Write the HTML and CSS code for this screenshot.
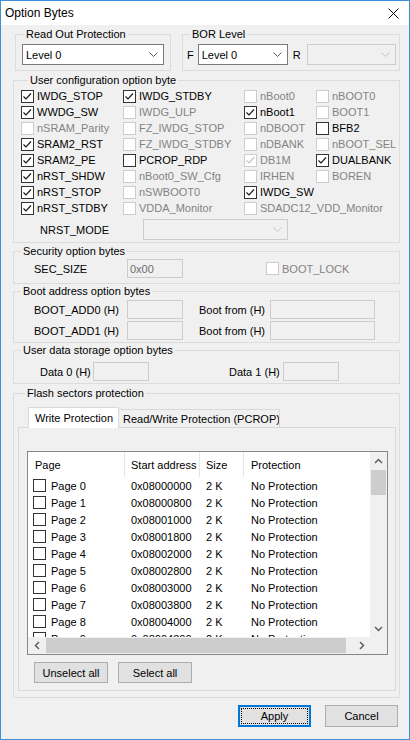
FILE: index.html
```html
<!DOCTYPE html>
<html lang="en">
<head>
    <meta charset="UTF-8">
    <meta name="viewport" content="width=device-width, initial-scale=1.0">
    <title>Option Bytes</title>
    <link rel="stylesheet" href="styles.css">
</head>
<body>
<div class="window">
    <div class="titlebar">
        <span class="title">Option Bytes</span>
        <svg class="close" width="11" height="11" viewBox="0 0 11 11"><path d="M0.5 0.5L10.5 10.5M10.5 0.5L0.5 10.5"/></svg>
    </div>

    <div class="dialog">
        <div class="top-row">
            <fieldset class="group rop">
                <legend>Read Out Protection</legend>
                <div class="combo rop-combo"><span>Level 0</span><svg class="chev" width="9" height="5" viewBox="0 0 9 5"><path d="M0.5 0.5L4.5 4.5L8.5 0.5"/></svg></div>
            </fieldset>
            <fieldset class="group bor">
                <legend>BOR Level</legend>
                <div class="bor-row">
                    <span class="bor-f">F</span>
                    <div class="combo bor-combo"><span>Level 0</span><svg class="chev" width="9" height="5" viewBox="0 0 9 5"><path d="M0.5 0.5L4.5 4.5L8.5 0.5"/></svg></div>
                    <span class="bor-r">R</span>
                    <div class="combo disabled bor-combo2"><span></span><svg class="chev" width="9" height="5" viewBox="0 0 9 5"><path d="M0.5 0.5L4.5 4.5L8.5 0.5"/></svg></div>
                </div>
            </fieldset>
        </div>

        <fieldset class="group user">
            <legend>User configuration option byte</legend>
            <div class="opts">
                <!-- column 1 -->
                <label class="cb"><span class="box"><svg viewBox="0 0 11 11" width="11" height="11"><path d="M1.5 5.5L4 8L9 2.5"/></svg></span>IWDG_STOP</label>
                <label class="cb"><span class="box"><svg viewBox="0 0 11 11" width="11" height="11"><path d="M1.5 5.5L4 8L9 2.5"/></svg></span>WWDG_SW</label>
                <label class="cb dis"><span class="box"></span>nSRAM_Parity</label>
                <label class="cb"><span class="box"><svg viewBox="0 0 11 11" width="11" height="11"><path d="M1.5 5.5L4 8L9 2.5"/></svg></span>SRAM2_RST</label>
                <label class="cb"><span class="box"><svg viewBox="0 0 11 11" width="11" height="11"><path d="M1.5 5.5L4 8L9 2.5"/></svg></span>SRAM2_PE</label>
                <label class="cb"><span class="box"><svg viewBox="0 0 11 11" width="11" height="11"><path d="M1.5 5.5L4 8L9 2.5"/></svg></span>nRST_SHDW</label>
                <label class="cb"><span class="box"><svg viewBox="0 0 11 11" width="11" height="11"><path d="M1.5 5.5L4 8L9 2.5"/></svg></span>nRST_STOP</label>
                <label class="cb"><span class="box"><svg viewBox="0 0 11 11" width="11" height="11"><path d="M1.5 5.5L4 8L9 2.5"/></svg></span>nRST_STDBY</label>
                <!-- column 2 -->
                <label class="cb"><span class="box"><svg viewBox="0 0 11 11" width="11" height="11"><path d="M1.5 5.5L4 8L9 2.5"/></svg></span>IWDG_STDBY</label>
                <label class="cb dis"><span class="box"></span>IWDG_ULP</label>
                <label class="cb dis"><span class="box"></span>FZ_IWDG_STOP</label>
                <label class="cb dis"><span class="box"></span>FZ_IWDG_STDBY</label>
                <label class="cb"><span class="box"></span>PCROP_RDP</label>
                <label class="cb dis"><span class="box"></span>nBoot0_SW_Cfg</label>
                <label class="cb dis"><span class="box"></span>nSWBOOT0</label>
                <label class="cb dis"><span class="box"></span>VDDA_Monitor</label>
                <!-- column 3 -->
                <label class="cb dis"><span class="box"></span>nBoot0</label>
                <label class="cb"><span class="box"><svg viewBox="0 0 11 11" width="11" height="11"><path d="M1.5 5.5L4 8L9 2.5"/></svg></span>nBoot1</label>
                <label class="cb dis"><span class="box"></span>nDBOOT</label>
                <label class="cb dis"><span class="box"></span>nDBANK</label>
                <label class="cb dis"><span class="box"><svg viewBox="0 0 11 11" width="11" height="11"><path d="M1.5 5.5L4 8L9 2.5"/></svg></span>DB1M</label>
                <label class="cb dis"><span class="box"></span>IRHEN</label>
                <label class="cb"><span class="box"><svg viewBox="0 0 11 11" width="11" height="11"><path d="M1.5 5.5L4 8L9 2.5"/></svg></span>IWDG_SW</label>
                <label class="cb dis"><span class="box"></span>SDADC12_VDD_Monitor</label>
                <!-- column 4 -->
                <label class="cb dis"><span class="box"></span>nBOOT0</label>
                <label class="cb dis"><span class="box"></span>BOOT1</label>
                <label class="cb"><span class="box"></span>BFB2</label>
                <label class="cb dis"><span class="box"></span>nBOOT_SEL</label>
                <label class="cb"><span class="box"><svg viewBox="0 0 11 11" width="11" height="11"><path d="M1.5 5.5L4 8L9 2.5"/></svg></span>DUALBANK</label>
                <label class="cb dis"><span class="box"></span>BOREN</label>
            </div>
            <div class="nrst">
                <span class="nrst-label">NRST_MODE</span>
                <div class="combo disabled nrst-combo"><span></span><svg class="chev" width="9" height="5" viewBox="0 0 9 5"><path d="M0.5 0.5L4.5 4.5L8.5 0.5"/></svg></div>
            </div>
        </fieldset>

        <fieldset class="group sec">
            <legend>Security option bytes</legend>
            <div class="field-row">
                <span class="lbl lbl-wide">SEC_SIZE</span>
                <div class="field short">0x00</div>
                <label class="cb dis boot-lock"><span class="box"></span>BOOT_LOCK</label>
            </div>
        </fieldset>

        <fieldset class="group boot">
            <legend>Boot address option bytes</legend>
            <div class="field-row">
                <span class="lbl lbl-wide">BOOT_ADD0 (H)</span>
                <div class="field short"></div>
                <span class="lbl lbl-from">Boot from (H)</span>
                <div class="field long"></div>
            </div>
            <div class="field-row second">
                <span class="lbl lbl-wide">BOOT_ADD1 (H)</span>
                <div class="field short"></div>
                <span class="lbl lbl-from">Boot from (H)</span>
                <div class="field long"></div>
            </div>
        </fieldset>

        <fieldset class="group udata">
            <legend>User data storage option bytes</legend>
            <div class="field-row">
                <span class="lbl lbl-data0">Data 0 (H)</span>
                <div class="field short"></div>
                <span class="lbl lbl-data1">Data 1 (H)</span>
                <div class="field short"></div>
            </div>
        </fieldset>

        <fieldset class="group flash">
            <legend>Flash sectors protection</legend>
            <div class="tabs">
                <div class="tab sel">Write Protection</div>
                <div class="tab">Read/Write Protection (PCROP)</div>
            </div>
            <div class="tabpanel">
                <div class="list">
                    <div class="lv-body">
                        <div class="lv-head">
                            <span class="c1">Page</span>
                            <span class="c2">Start address</span>
                            <span class="c3">Size</span>
                            <span class="c4">Protection</span>
                        </div>
                        <div class="lv-row"><span class="c1"><span class="box"></span>Page 0</span><span class="c2">0x08000000</span><span class="c3">2 K</span><span class="c4">No Protection</span></div>
                        <div class="lv-row"><span class="c1"><span class="box"></span>Page 1</span><span class="c2">0x08000800</span><span class="c3">2 K</span><span class="c4">No Protection</span></div>
                        <div class="lv-row"><span class="c1"><span class="box"></span>Page 2</span><span class="c2">0x08001000</span><span class="c3">2 K</span><span class="c4">No Protection</span></div>
                        <div class="lv-row"><span class="c1"><span class="box"></span>Page 3</span><span class="c2">0x08001800</span><span class="c3">2 K</span><span class="c4">No Protection</span></div>
                        <div class="lv-row"><span class="c1"><span class="box"></span>Page 4</span><span class="c2">0x08002000</span><span class="c3">2 K</span><span class="c4">No Protection</span></div>
                        <div class="lv-row"><span class="c1"><span class="box"></span>Page 5</span><span class="c2">0x08002800</span><span class="c3">2 K</span><span class="c4">No Protection</span></div>
                        <div class="lv-row"><span class="c1"><span class="box"></span>Page 6</span><span class="c2">0x08003000</span><span class="c3">2 K</span><span class="c4">No Protection</span></div>
                        <div class="lv-row"><span class="c1"><span class="box"></span>Page 7</span><span class="c2">0x08003800</span><span class="c3">2 K</span><span class="c4">No Protection</span></div>
                        <div class="lv-row"><span class="c1"><span class="box"></span>Page 8</span><span class="c2">0x08004000</span><span class="c3">2 K</span><span class="c4">No Protection</span></div>
                        <div class="lv-row"><span class="c1"><span class="box"></span>Page 9</span><span class="c2">0x08004800</span><span class="c3">2 K</span><span class="c4">No Protection</span></div>
                    </div>
                    <div class="vscroll">
                        <div class="sb-arrow"><svg width="9" height="6" viewBox="0 0 9 6"><path d="M1 5L4.5 1.5L8 5"/></svg></div>
                        <div class="vthumb"></div>
                        <div class="sb-fill"></div>
                        <div class="sb-arrow"><svg width="9" height="6" viewBox="0 0 9 6"><path d="M1 1L4.5 4.5L8 1"/></svg></div>
                    </div>
                    <div class="hscroll">
                        <div class="sb-arrow"><svg width="6" height="9" viewBox="0 0 6 9"><path d="M5 1L1.5 4.5L5 8"/></svg></div>
                        <div class="hthumb"></div>
                        <div class="sb-fill"></div>
                        <div class="sb-arrow"><svg width="6" height="9" viewBox="0 0 6 9"><path d="M1 1L4.5 4.5L1 8"/></svg></div>
                    </div>
                    <div class="sb-corner"></div>
                </div>
                <div class="list-buttons">
                    <button class="btn small">Unselect all</button>
                    <button class="btn small">Select all</button>
                </div>
            </div>
        </fieldset>

        <div class="actions">
            <button class="btn default">Apply</button>
            <button class="btn">Cancel</button>
        </div>
    </div>
</div>
</body>
</html>
```

FILE: styles.css
```css
body {
    margin: 0;
    background: #ffffff;
}
.window {
    width: 410px;
    height: 740px;
    box-sizing: border-box;
    border: 1px solid #3d8fd6;
    background: #f0f0f0;
    font-family: "Liberation Sans", Arial, sans-serif;
    font-size: 11px;
    color: #000;
    overflow: hidden;
}
.titlebar {
    height: 24px;
    background: #fff;
    display: flex;
    align-items: center;
    justify-content: space-between;
    padding: 0 10px 0 4px;
}
.title {
    font-size: 12px;
}
.close path {
    stroke: #000;
    stroke-width: 1;
}

/* group boxes */
.group {
    box-sizing: border-box;
    border: 1px solid #dcdcdc;
    margin: 0;
    padding: 0;
    min-width: 0;
}
.group legend {
    padding: 0 2px;
    margin-left: 7px;
    line-height: 13px;
    font-size: 11px;
}
.dialog > .group {
    width: 387px;
    margin-left: 12px;
}

/* combo boxes */
.combo {
    box-sizing: border-box;
    height: 21px;
    display: flex;
    align-items: center;
    justify-content: space-between;
    border: 1px solid #7a7a7a;
    background: #fff;
    padding: 0 5px 0 3px;
}
.chev path {
    fill: none;
    stroke: #5a5a5a;
    stroke-width: 1;
}
.combo.disabled {
    border-color: #cccccc;
    background: #f0f0f0;
}
.combo.disabled .chev path {
    stroke: #c2c2c2;
}

.top-row {
    display: flex;
    margin: 3px 0 0 14px;
}
.rop {
    width: 156px;
    height: 43px;
}
.rop legend {
    margin-left: 8px;
}
.rop-combo {
    width: 142px;
    margin: 3px 0 0 6px;
}
.bor {
    width: 218px;
    height: 43px;
    margin-left: 11px;
}
.bor-row {
    display: flex;
    align-items: center;
    margin-top: 3px;
}
.bor-f {
    margin-left: 4px;
}
.bor-combo {
    width: 90px;
    margin-left: 4px;
}
.bor-r {
    margin-left: 5px;
}
.bor-combo2 {
    width: 89px;
    margin-left: 6px;
}

/* checkboxes */
.cb {
    display: flex;
    align-items: center;
    gap: 3px;
    white-space: nowrap;
}
.box {
    box-sizing: border-box;
    width: 13px;
    height: 13px;
    flex: none;
    border: 1px solid #333;
    background: #fff;
}
.box svg {
    display: block;
}
.box path {
    fill: none;
    stroke: #1a1a1a;
    stroke-width: 1.2;
}
.cb.dis {
    color: #838383;
}
.cb.dis .box {
    border-color: #cccccc;
}
.cb.dis .box path {
    stroke: #c4c4c4;
}

.user {
    margin-top: 3px;
    height: 169px;
    padding: 1px 0 0 7px;
}
.opts {
    display: grid;
    grid-template-columns: 102px 121px 72px 1fr;
    grid-template-rows: repeat(8, 16px);
    grid-auto-flow: column;
}
.nrst {
    display: flex;
    align-items: center;
    height: 21px;
    margin-top: 3px;
}
.nrst-label {
    width: 103px;
    margin-left: 19px;
}
.nrst-combo {
    width: 145px;
}

/* text fields */
.field-row {
    display: flex;
    align-items: center;
    height: 19px;
}
.field-row.second {
    margin-top: 2px;
}
.field {
    box-sizing: border-box;
    height: 19px;
    border: 1px solid #cccccc;
    background: #f0f0f0;
    color: #6d6d6d;
    padding-left: 2px;
    display: flex;
    align-items: center;
}
.field.short {
    width: 56px;
}
.field.long {
    width: 105px;
}
.lbl-wide {
    width: 93px;
    margin-left: 20px;
}
.lbl-from {
    width: 71px;
    margin-left: 16px;
}
.lbl-data0 {
    width: 53px;
    margin-left: 26px;
}
.lbl-data1 {
    width: 54px;
    margin-left: 80px;
}
.boot-lock {
    margin-left: 83px;
}

.sec {
    margin-top: 2px;
    height: 39px;
    padding-top: 1px;
}
.boot {
    margin-top: 1px;
    height: 58px;
    padding-top: 2px;
}
.udata {
    margin-top: 1px;
    height: 40px;
    padding-top: 5px;
}

/* tab control */
.flash {
    margin-top: 3px;
    height: 311px;
    padding: 7px 0 0 4px;
}
.tabs {
    display: flex;
    align-items: flex-end;
    height: 20px;
    margin-left: 10px;
    position: relative;
    z-index: 1;
}
.tab {
    box-sizing: border-box;
    height: 18px;
    width: 162px;
    margin-left: -1px;
    padding-left: 4px;
    display: flex;
    align-items: center;
    white-space: nowrap;
    overflow: hidden;
    border: 1px solid #d9d9d9;
    border-bottom: none;
    background: #f0f0f0;
}
.tab.sel {
    width: 91px;
    height: 21px;
    margin: 0 0 -1px 0;
    padding-left: 6px;
    background: #fff;
    position: relative;
    z-index: 1;
}
.tabpanel {
    box-sizing: border-box;
    width: 378px;
    height: 264px;
    border: 1px solid #d9d9d9;
    background: #f0f0f0;
    padding: 23px 0 0 8px;
}

/* list view */
.list {
    box-sizing: border-box;
    width: 361px;
    height: 204px;
    border: 1px solid #828790;
    background: #fff;
    display: grid;
    grid-template-columns: 1fr 17px;
    grid-template-rows: 1fr 17px;
}
.lv-body {
    overflow: hidden;
}
.lv-head {
    display: flex;
    height: 25px;
}
.lv-head span {
    box-sizing: border-box;
    display: flex;
    align-items: center;
    border-right: 1px solid #e5e5e5;
}
.lv-head .c4 {
    border-right: none;
}
.lv-row {
    display: flex;
    align-items: center;
    height: 17px;
    white-space: nowrap;
}
.lv-row span {
    box-sizing: border-box;
}
.c1 {
    width: 97px;
    padding-left: 7px;
}
.c2 {
    width: 75px;
    padding-left: 6px;
}
.c3 {
    width: 44px;
    padding-left: 6px;
}
.c4 {
    flex: 1;
    padding-left: 7px;
}
.lv-row .c1 {
    display: flex;
    align-items: center;
    padding-left: 5px;
}
.lv-row .c1 .box {
    margin-right: 5px;
}

/* scroll bars */
.vscroll,
.hscroll {
    background: #f0f0f0;
    display: flex;
}
.vscroll {
    flex-direction: column;
}
.sb-arrow {
    width: 17px;
    height: 17px;
    flex: none;
    display: flex;
    align-items: center;
    justify-content: center;
}
.sb-arrow path {
    fill: none;
    stroke: #606060;
    stroke-width: 1.5;
}
.sb-fill {
    flex: 1;
}
.vthumb {
    height: 25px;
    margin: 1px 1px 0;
    background: #cdcdcd;
}
.hthumb {
    width: 300px;
    margin: 1px 0 1px 1px;
    background: #cdcdcd;
}
.sb-corner {
    background: #f0f0f0;
}

/* buttons */
.btn {
    box-sizing: border-box;
    font-family: "Liberation Sans", Arial, sans-serif;
    font-size: 11px;
    color: #000;
    background: #e1e1e1;
    border: 1px solid #adadad;
    border-radius: 0;
    padding: 0;
    width: 73px;
    height: 22px;
}
.btn.small {
    width: 74px;
    height: 21px;
}
.btn.default {
    border: 2px solid #0078d7;
    outline: 1px dotted #000;
    outline-offset: -4px;
}
.list-buttons {
    display: flex;
    gap: 10px;
    margin: 7px 0 0 7px;
}
.actions {
    display: flex;
    justify-content: flex-end;
    gap: 14px;
    margin: 7px 11px 0 0;
}
```
